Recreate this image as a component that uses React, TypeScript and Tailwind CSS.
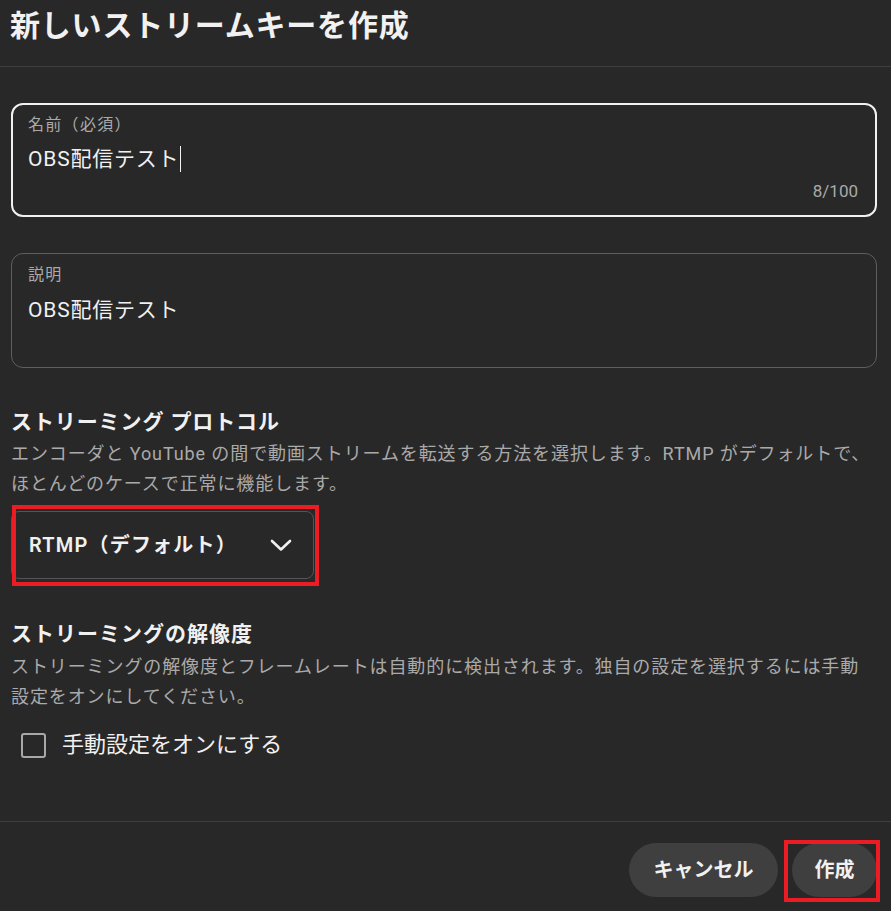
const font = "font-['Roboto','Noto_Sans_CJK_JP',sans-serif]";

function Chevron() {
  return (
    <svg width="24" height="24" viewBox="0 0 24 24" fill="none" stroke="currentColor" strokeWidth="2.6" strokeLinecap="round" strokeLinejoin="round">
      <path d="M3 8l9 8.5L21 8" />
    </svg>
  );
}

function App() {
  return (
    <div className={`${font} w-[891px] h-[911px] bg-[#282828] text-[#f1f1f1] flex flex-col overflow-hidden`}>
      <header className="h-[67px] border-b border-[#3e3e3e] px-[10px] shrink-0">
        <h1 className="text-[30px] leading-[52px] font-bold tracking-[0.8px]">新しいストリームキーを作成</h1>
      </header>

      <main className="flex-1 pl-[11px] pr-[14px] pt-[36px]">
        {/* name */}
        <div className="h-[114px] rounded-[12px] border-2 border-[#f1f1f1] pl-[15px] pr-[17px] pt-[8px] pb-[12px] flex flex-col">
          <div className="text-[16px] leading-[24px] text-[#aaaaaa] tracking-[1.3px]">名前（必須）</div>
          <div className="mt-[7px] text-[21px] leading-[30px] tracking-[0.8px] flex items-center">
            OBS配信テスト
            <span className="inline-block w-px h-[26px] bg-[#f1f1f1] ml-[1px]" />
          </div>
          <div className="mt-auto text-right text-[17px] leading-[24px] text-[#aaaaaa]">8/100</div>
        </div>

        {/* description */}
        <div className="mt-[36px] h-[115px] rounded-[12px] border border-[#5e5e5e] pl-[16px] pr-[17px] pt-[9px]">
          <div className="text-[16px] leading-[24px] text-[#aaaaaa] tracking-[1.3px]">説明</div>
          <div className="mt-[8px] text-[21px] leading-[30px] tracking-[0.8px]">OBS配信テスト</div>
        </div>

        {/* protocol */}
        <h2 className="mt-[39px] text-[21px] leading-[30px] font-bold tracking-[0.9px]">ストリーミング プロトコル</h2>
        <p className="mt-[2px] text-[18px] leading-[30px] text-[#aaaaaa] tracking-[0.9px] whitespace-nowrap">
          エンコーダと YouTube の間で動画ストリームを転送する方法を選択します。RTMP がデフォルトで、
          <br />
          ほとんどのケースで正常に機能します。
        </p>

        <div className="relative mt-[12px] w-[303px]">
          <button className="w-full h-[68px] rounded-[8px] border border-[#555555] bg-[#282828] pl-[17px] pr-[20px] flex items-center justify-between text-[20px] font-semibold tracking-[1.2px]">
            <span>RTMP（デフォルト）</span>
            <Chevron />
          </button>
          <div className="absolute left-[1px] top-[-6px] w-[307px] h-[81px] border-4 border-[#ec1c24] pointer-events-none" />
        </div>

        {/* resolution */}
        <h2 className="mt-[40px] text-[21px] leading-[30px] font-bold tracking-[1px]">ストリーミングの解像度</h2>
        <p className="mt-[3px] text-[18px] leading-[30px] text-[#aaaaaa] tracking-[0.9px] whitespace-nowrap">
          ストリーミングの解像度とフレームレートは自動的に検出されます。独自の設定を選択するには手動
          <br />
          設定をオンにしてください。
        </p>

        <label className="mt-[20px] ml-[10px] flex items-center gap-[16px] h-[26px]">
          <span className="w-[25px] h-[25px] rounded-[3px] border-2 border-[#a8a8a8]" />
          <span className="text-[22px] leading-[30px]">手動設定をオンにする</span>
        </label>
      </main>

      <footer className="h-[90px] shrink-0 border-t border-[#3e3e3e] pt-[21px] pr-[14px] flex justify-end gap-[14px]">
        <button className="w-[149px] h-[54px] rounded-full bg-[#3f3f3f] text-[20px] font-bold flex items-center justify-center">
          キャンセル
        </button>
        <div className="relative">
          <button className="w-[85px] h-[54px] rounded-full bg-[#3f3f3f] text-[20px] font-bold flex items-center justify-center">
            作成
          </button>
          <div className="absolute left-[-8px] top-[-3px] w-[96px] h-[62px] border-4 border-[#ec1c24] pointer-events-none" />
        </div>
      </footer>
    </div>
  );
}

export default App;
